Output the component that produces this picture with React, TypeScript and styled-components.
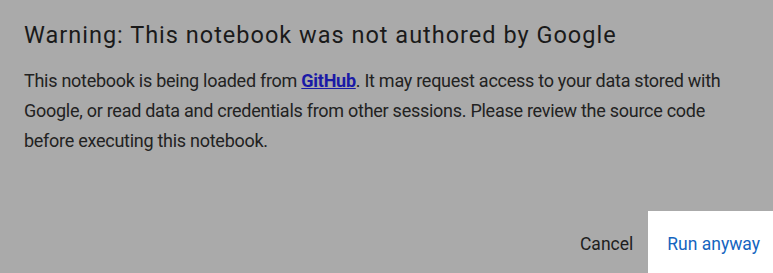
import React from "react";
import styled, { createGlobalStyle } from "styled-components";

const Global = createGlobalStyle`
  html, body { margin: 0; padding: 0; background: #aaaaaa; }
  body { font-family: Roboto, "Noto Sans", sans-serif; }
`;

const Dialog = styled.div`
  width: 773px;
  height: 273px;
  background: #aaaaaa;
  display: flex;
  flex-direction: column;
  box-sizing: border-box;
  overflow: hidden;
`;

const Title = styled.h2`
  margin: 0;
  padding: 19px 24px 0 24px;
  font-size: 23.5px;
  line-height: 32px;
  font-weight: 400;
  letter-spacing: 1px;
  color: #1a1a1a;
`;

const Body = styled.p`
  margin: 0;
  padding: 15px 24px 0 24px;
  font-size: 18px;
  line-height: 30px;
  letter-spacing: -0.27px;
  color: #222222;
`;

const Link = styled.a`
  color: #1a1aa6;
  font-weight: 700;
  text-decoration: underline;
`;

const Actions = styled.div`
  margin-top: auto;
  display: flex;
  justify-content: flex-end;
  align-items: stretch;
  height: 62px;
`;

const Button = styled.button<{ $primary?: boolean }>`
  border: none;
  font-family: Roboto, "Noto Sans", sans-serif;
  font-size: 17.5px;
  padding: 4px ${(p) => (p.$primary ? "13px" : "15px")} 0 ${(p) => (p.$primary ? "19px" : "8px")};
  background: ${(p) => (p.$primary ? "#ffffff" : "transparent")};
  color: ${(p) => (p.$primary ? "#1565c0" : "#1e1e1e")};
  cursor: pointer;
`;

export default function App() {
  return (
    <>
      <Global />
      <Dialog>
        <Title>Warning: This notebook was not authored by Google</Title>
        <Body>
          This notebook is being loaded from <Link href="#">GitHub</Link>. It may request access to your data stored with
          Google, or read data and credentials from other sessions. Please review the source code before executing
          this notebook.
        </Body>
        <Actions>
          <Button>Cancel</Button>
          <Button $primary>Run anyway</Button>
        </Actions>
      </Dialog>
    </>
  );
}
